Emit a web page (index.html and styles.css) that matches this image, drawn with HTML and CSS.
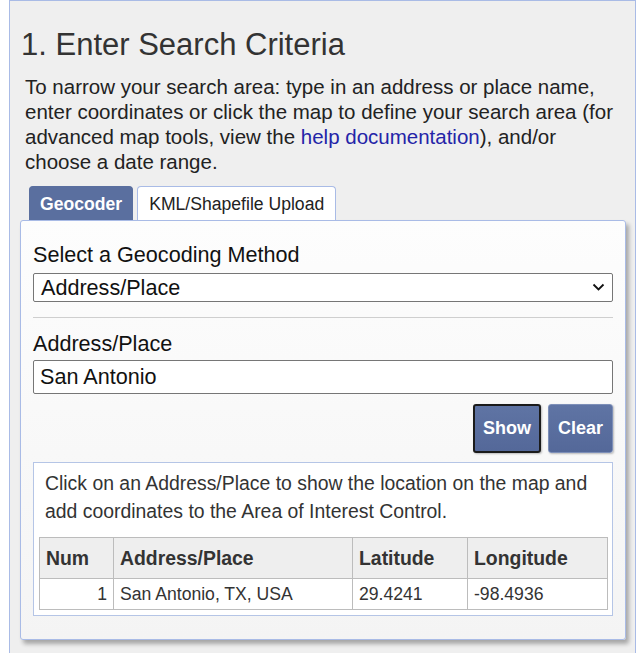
FILE: index.html
```html
<!DOCTYPE html>
<html lang="en">
<head>
<meta charset="utf-8">
<title>Enter Search Criteria</title>
<link rel="stylesheet" href="styles.css">
</head>
<body>
<section class="criteria">
  <h2 class="criteria-title">1. Enter Search Criteria</h2>
  <p class="criteria-intro">To narrow your search area: type in an address or place name, enter coordinates or click the map to define your search area (for advanced map tools, view the <a href="#" class="help-link">help documentation</a>), and/or choose a date range.</p>

  <div class="tabs">
    <div class="tab tab-active">Geocoder</div>
    <div class="tab">KML/Shapefile Upload</div>
  </div>

  <div class="panel">
    <label class="field-label">Select a Geocoding Method</label>
    <div class="select-wrap">
      <div class="select-box">Address/Place</div>
      <svg class="select-arrow" width="13" height="9" viewBox="0 0 13 9"><path d="M1.5 1.5 L6.5 6.5 L11.5 1.5" fill="none" stroke="#111" stroke-width="1.8"/></svg>
    </div>
    <hr class="divider">
    <label class="field-label">Address/Place</label>
    <div class="text-input">San Antonio</div>
    <div class="btn-row">
      <button class="btn btn-focused">Show</button>
      <button class="btn">Clear</button>
    </div>
    <div class="results">
      <p class="results-note">Click on an Address/Place to show the location on the map and add coordinates to the Area of Interest Control.</p>
      <table class="results-table">
        <thead>
          <tr>
            <th class="col-num">Num</th>
            <th class="col-place">Address/Place</th>
            <th class="col-lat">Latitude</th>
            <th class="col-lon">Longitude</th>
          </tr>
        </thead>
        <tbody>
          <tr>
            <td class="num-cell">1</td>
            <td>San Antonio, TX, USA</td>
            <td>29.4241</td>
            <td>-98.4936</td>
          </tr>
        </tbody>
      </table>
    </div>
  </div>
</section>
</body>
</html>
```
FILE: styles.css
```css
html, body {
  margin: 0;
  padding: 0;
  background: #ffffff;
}
body {
  font-family: "Liberation Sans", Arial, sans-serif;
  color: #333;
}
.criteria {
  margin-left: 9px;
  width: 627px;
  box-sizing: border-box;
  border: 1px solid #a9bbe6;
  border-bottom: none;
  background: #efefef;
  padding: 0 9px 30px 10px;
}
.criteria-title {
  margin: 27px 0 0 1px;
  font-size: 31px;
  line-height: 34px;
  font-weight: normal;
  color: #333;
}
.criteria-intro {
  margin: 12px 0 0 0;
  padding-left: 5px;
  font-size: 20.5px;
  line-height: 25px;
  color: #222;
}
.help-link {
  color: #2424a8;
  text-decoration: none;
}
.tabs {
  display: flex;
  gap: 4px;
  margin: 12px 0 0 9px;
  position: relative;
  z-index: 1;
}
.tab {
  height: 34px;
  line-height: 34px;
  padding: 0 11px;
  font-size: 17.6px;
  color: #222;
  background: #fff;
  border: 1px solid #a9bbe6;
  border-bottom: none;
  border-radius: 4px 4px 0 0;
  box-sizing: border-box;
}
.tab-active {
  background: #5a6f9f;
  border-color: #5a6f9f;
  color: #fff;
  font-weight: bold;
  padding: 0 10px;
}
.panel {
  width: 606px;
  box-sizing: border-box;
  border: 1px solid #a9bbe6;
  border-radius: 3px;
  background: linear-gradient(#fdfdfd, #f4f4f4);
  box-shadow: 3px 4px 4px rgba(0, 0, 0, 0.3);
  padding: 21px 12px 23px 12px;
}
.field-label {
  display: block;
  font-size: 21.6px;
  line-height: 26px;
  color: #111;
}
.select-wrap {
  position: relative;
  margin-top: 5px;
}
.select-box {
  height: 29px;
  box-sizing: border-box;
  border: 1px solid #767676;
  border-radius: 2px;
  background: #fff;
  font-size: 21.6px;
  line-height: 27px;
  padding-left: 7px;
  color: #111;
}
.select-arrow {
  position: absolute;
  right: 8px;
  top: 10px;
}
.divider {
  border: none;
  border-top: 1px solid #cfcfcf;
  margin: 15px 0 13px 0;
}
.text-input {
  margin-top: 3px;
  height: 34px;
  box-sizing: border-box;
  border: 1px solid #767676;
  border-radius: 2px;
  background: #fff;
  font-size: 21.6px;
  line-height: 32px;
  padding-left: 6px;
  color: #111;
}
.btn-row {
  display: flex;
  justify-content: flex-end;
  gap: 7px;
  margin-top: 10px;
}
.btn {
  height: 49px;
  padding: 0 9px;
  font-family: "Liberation Sans", Arial, sans-serif;
  font-size: 18px;
  font-weight: bold;
  color: #fff;
  background: linear-gradient(#5f74a4, #546899);
  border: 1px solid #7d8fb8;
  border-radius: 3px;
  box-shadow: 1px 1px 2px rgba(0, 0, 0, 0.25);
}
.btn-focused {
  border: 2px solid #1b1b1b;
  padding: 0 8px;
}
.results {
  margin-top: 9px;
  background: #fff;
  border: 1px solid #b5c5e6;
  padding: 0 5px 5px 5px;
}
.results-note {
  margin: 7px 0 12px 0;
  padding-left: 6px;
  font-size: 19.4px;
  line-height: 27.5px;
  color: #333;
}
.results-table {
  width: 568px;
  table-layout: fixed;
  border-collapse: collapse;
  font-size: 17.6px;
  color: #333;
}
.results-table th,
.results-table td {
  box-sizing: border-box;
  border: 1px solid #bcbcbc;
  text-align: left;
  padding: 0 6px;
}
.results-table th {
  height: 41px;
  background: #eeeeee;
  font-size: 19.4px;
  font-weight: bold;
}
.results-table td {
  height: 31px;
  background: #fff;
}
.col-num { width: 74px; }
.col-place { width: 239px; }
.col-lat { width: 115px; }
.col-lon { width: 140px; }
.results-table td.num-cell {
  text-align: right;
}
```
